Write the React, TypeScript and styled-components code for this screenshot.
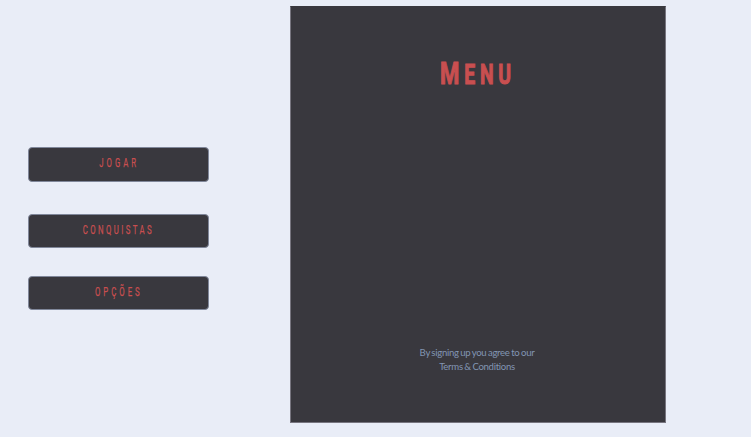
import React from 'react';
import styled, { createGlobalStyle } from 'styled-components';

const GlobalStyle = createGlobalStyle`
  * { box-sizing: border-box; }
  body { margin: 0; background: #e9edf7; overflow: hidden; }
`;

const Page = styled.main`
  display: flex;
  width: 751px;
  height: 437px;
  padding: 6px 0 0 28px;
  background: #e9edf7;
`;

const Actions = styled.nav`
  display: flex;
  flex-direction: column;
  width: 181px;
  margin-right: 81px;
  padding-top: 141px;
`;

const MenuButton = styled.button<{ $height: number; $gap: number }>`
  display: flex;
  justify-content: center;
  align-items: flex-start;
  width: 181px;
  height: ${({ $height }) => $height}px;
  margin: 0 0 ${({ $gap }) => $gap}px;
  padding: 6px 2px 0 0;
  border: 1px solid #80879a;
  border-radius: 4px;
  background: #39383e;
  color: #c94f50;
  cursor: pointer;
`;

const Label = styled.span<{ $spacing: number }>`
  display: block;
  font: 400 13px/18px Roboto, sans-serif;
  letter-spacing: ${({ $spacing }) => $spacing}px;
  margin-right: -${({ $spacing }) => $spacing * 0.6}px;
  white-space: nowrap;
  transform: scaleX(0.6);
  -webkit-text-stroke: 0.25px currentColor;
`;

const Panel = styled.section`
  display: flex;
  flex-direction: column;
  justify-content: space-between;
  align-items: center;
  width: 376px;
  height: 417px;
  padding: 48px 0 48px;
  border: 1px solid #77757f;
  border-top-color: #39383e;
  background: #39383e;
`;

const Title = styled.h1`
  margin: 0;
  color: #c94f50;
  font: 700 32px/36px Roboto, sans-serif;
  letter-spacing: 7px;
  white-space: nowrap;
  transform: scaleX(0.69);
  -webkit-text-stroke: 1.1px currentColor;
`;

const SmallCaps = styled.span`
  font-size: 28px;
`;

const Terms = styled.p`
  margin: 0 2px 0 0;
  color: #8295b3;
  font: 400 9.6px/14px Lato, sans-serif;
  letter-spacing: -0.3px;
  word-spacing: -0.6px;
  text-align: center;
`;

const actions = [
  { label: 'JOGAR', height: 35, gap: 32, spacing: 5 },
  { label: 'CONQUISTAS', height: 34, gap: 28, spacing: 4 },
  { label: 'OPÇÕES', height: 34, gap: 0, spacing: 5 },
];

export default function App() {
  return (
    <>
      <GlobalStyle />
      <Page>
        <Actions>
          {actions.map(({ label, height, gap, spacing }) => (
            <MenuButton key={label} $height={height} $gap={gap}>
              <Label $spacing={spacing}>{label}</Label>
            </MenuButton>
          ))}
        </Actions>
        <Panel>
          <Title>M<SmallCaps>ENU</SmallCaps></Title>
          <Terms>By signing up you agree to our<br />Terms &amp; Conditions</Terms>
        </Panel>
      </Page>
    </>
  );
}
